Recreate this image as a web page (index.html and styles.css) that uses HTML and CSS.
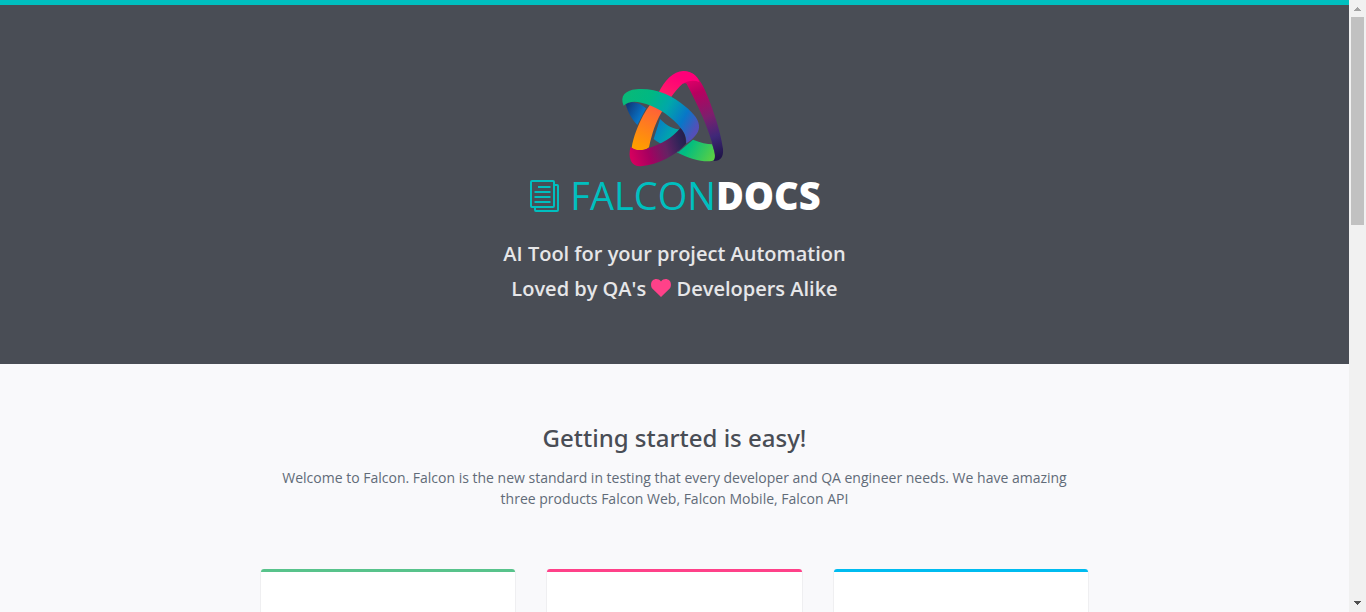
FILE: index.html
```
<!DOCTYPE html>
<html lang="en">
<head>
<meta charset="utf-8">
<title>FalconDocs</title>
<link rel="stylesheet" href="styles.css">
</head>
<body>
<div class="page">
<header class="header">
  <svg class="logo" viewBox="0 0 387 345">
    <defs>
      <linearGradient id="g1" gradientUnits="userSpaceOnUse" x1="200" y1="50" x2="95" y2="265"><stop offset="0" stop-color="#ff0078"/><stop offset=".27" stop-color="#ff1c68"/><stop offset=".5" stop-color="#ff6535"/><stop offset="1" stop-color="#ff9c00"/></linearGradient>
      <linearGradient id="g2" gradientUnits="userSpaceOnUse" x1="235" y1="60" x2="330" y2="290"><stop offset="0" stop-color="#e00069"/><stop offset=".18" stop-color="#b8005f"/><stop offset=".5" stop-color="#7c1f6d"/><stop offset=".75" stop-color="#3f2878"/><stop offset="1" stop-color="#21164a"/></linearGradient>
      <linearGradient id="g3" gradientUnits="userSpaceOnUse" x1="45" y1="105" x2="250" y2="220"><stop offset="0" stop-color="#08b978"/><stop offset=".3" stop-color="#00b883"/><stop offset=".55" stop-color="#00a7aa"/><stop offset=".8" stop-color="#0877c8"/><stop offset="1" stop-color="#5350b8"/></linearGradient>
      <linearGradient id="g4" gradientUnits="userSpaceOnUse" x1="50" y1="140" x2="310" y2="290"><stop offset="0" stop-color="#103a7c"/><stop offset=".17" stop-color="#0873c5"/><stop offset=".35" stop-color="#087fc5"/><stop offset=".52" stop-color="#00a5ad"/><stop offset=".73" stop-color="#00bd81"/><stop offset="1" stop-color="#58cf45"/></linearGradient>
      <linearGradient id="g5" gradientUnits="userSpaceOnUse" x1="65" y1="290" x2="228" y2="240"><stop offset="0" stop-color="#d4005e"/><stop offset=".3" stop-color="#a60060"/><stop offset=".62" stop-color="#652263"/><stop offset=".88" stop-color="#2e2458"/><stop offset="1" stop-color="#24204c"/></linearGradient>
    </defs>
    <path fill="url(#g4)" d="M47 132C53 157 66 178 82 195L108 145C88 126 66 122 47 132ZM150 177C170 197 190 208 212 208L204 278C181 267 151 253 131 237ZM249 239C272 248 292 253 306 253C310 265 316 280 315 300C291 310 243 299 203 278Z"/>
    <path fill="url(#g2)" d="M211 36C244 28 264 49 280 80C301 123 332 210 339 267C341 291 331 304 310 303C317 294 316 282 312 270C297 207 263 135 232 76C230 70 226 69 219 71Z"/>
    <path fill="url(#g1)" d="M145 99C164 62 190 33 220 33C246 33 262 48 268 66C252 59 232 62 218 71C194 91 172 127 153 160C137 188 127 217 117 262C101 275 76 274 65 263C70 230 84 196 99 167C112 143 128 125 145 99Z"/>
    <path fill="url(#g3)" d="M41 137C29 109 45 91 79 88C134 83 187 106 224 138C253 161 269 182 267 203C266 220 249 237 229 250C231 227 218 211 203 193C174 161 132 136 94 128C71 122 52 126 41 137Z"/>
    <path fill="url(#g5)" d="M62 260C76 274 99 272 119 263C153 253 187 234 211 204C223 216 229 233 228 251C198 286 145 313 93 319C62 320 53 292 62 260Z"/>
  </svg>
  <h1 class="brand">
    <svg class="docs-icon" viewBox="0 0 30 32" fill="none" stroke="#00bfbf" stroke-width="2">
      <rect x="1" y="1" width="23" height="26" rx="1"/>
      <path d="M24 5h3q1 0 1 1v24q0 1-1 1H6q-1 0-1-1v-3"/>
      <path d="M8 7h12.500M4.500 12h16M4.500 17h16M4.500 22h16"/>
    </svg><span class="brand-name">FALCON</span><span class="brand-bold">DOCS</span>
  </h1>
  <div class="tagline">
    <p>AI Tool for your project Automation</p>
    <p>Loved by QA's <svg class="heart" viewBox="0 0 20 18"><path fill="#ff4189" d="M10 18 1.5 9.7C-.5 7.5-.4 3.5 1.6 1.6 4-.7 7.6-.4 10 2.5 12.4-.4 16-.7 18.400 1.6c2 1.900 2.100 5.900.1 8.100Z"/></svg> Developers Alike</p>
  </div>
</header>
<main class="content">
  <h2 class="title">Getting started is easy!</h2>
  <p class="intro">Welcome to Falcon. Falcon is the new standard in testing that every developer and QA engineer needs. We have amazing<br>three products Falcon Web, Falcon Mobile, Falcon API</p>
  <div class="cards">
    <section class="card green"></section>
    <section class="card pink"></section>
    <section class="card blue"></section>
  </div>
</main>
</div>
<div class="scrollbar">
  <svg class="arrow" viewBox="0 0 17 17" shape-rendering="crispEdges"><path fill="#a3a3a3" d="M8 7h1v1h1v1h1v1h1v1H5v-1h1V9h1V8h1z"/></svg>
  <div class="thumb"></div>
  <svg class="arrow down" viewBox="0 0 17 17" shape-rendering="crispEdges"><path fill="#505050" d="M5 6h7v1h-1v1h-1v1H9v1H8V9H7V8H6V7H5z"/></svg>
</div>
</body>
</html>
```
FILE: styles.css
```
* { box-sizing: border-box; }
body {
  margin: 0;
  display: flex;
  height: 612px;
  overflow: hidden;
  background: #f9f9fb;
  font-family: "Open Sans", sans-serif;
}
.page { flex: 1; height: 612px; overflow: hidden; }
.header {
  height: 364px;
  padding-top: 55px;
  border-top: 5px solid #00bfbf;
  background: #494d55;
  text-align: center;
}
.logo { display: block; width: 129px; height: 115px; margin: 0 auto; }
.brand {
  display: flex;
  justify-content: center;
  align-items: center;
  height: 44px;
  margin: -1px 0 0;
  padding-left: 2px;
  font-size: 38px;
  line-height: 44px;
  font-weight: 400;
}
.docs-icon { width: 30px; height: 32px; margin-right: 10px; }
.brand-name, .brand-bold { padding-bottom: 2px; }
.brand-name { color: #00bfbf; font-weight: 400; }
.brand-bold { color: #fff; font-weight: 800; }
.tagline { margin-top: 18px; color: #e6e6e8; font-size: 20px; font-weight: 600; line-height: 35px; }
.tagline p { margin: 0; }
.heart { width: 20px; height: 18px; vertical-align: -1px; }
.content { width: 830px; margin: 0 auto; padding-top: 60px; text-align: center; }
.title { margin: 0; color: #494d55; font-family: "Noto Sans", "Open Sans", sans-serif; font-size: 24px; font-weight: 500; line-height: 28px; }
.intro { margin: 15px 0 0; color: #616b78; font-size: 14px; line-height: 21px; }
.cards { display: grid; grid-template-columns: repeat(3, 1fr); gap: 30px; margin-top: 60px; }
.card { height: 200px; border: 1px solid #efeff1; border-top: 0; border-radius: 4px 4px 0 0; background: #fff; }
.card::before { content: ""; display: block; height: 3px; border-radius: 3px 3px 0 0; }
.green::before { background: #58c38b; }
.pink::before { background: #ff4189; }
.blue::before { background: #00bcf0; }
.scrollbar { display: flex; flex-direction: column; align-items: center; width: 17px; height: 612px; background: #f1f1f1; }
.arrow { width: 17px; height: 17px; }
.thumb { width: 13px; height: 208px; background: #c1c1c1; }
.down { margin-top: auto; }
```
